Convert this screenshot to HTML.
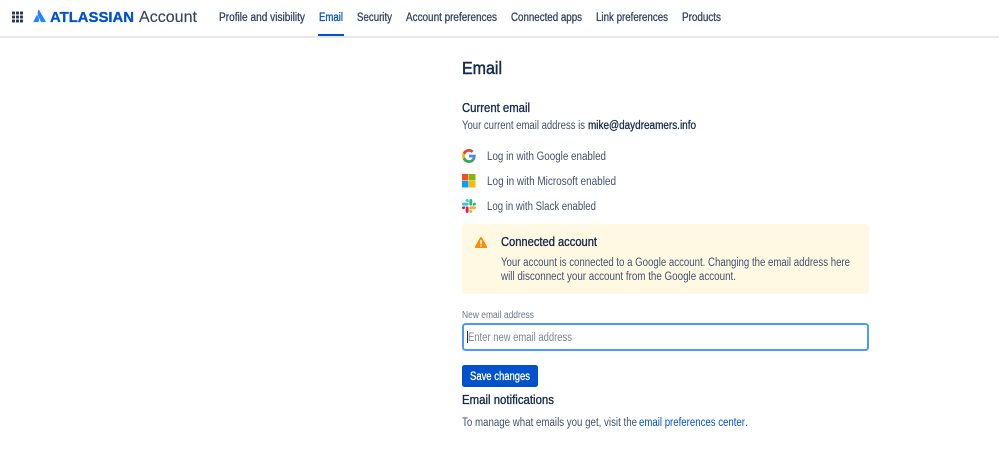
<!DOCTYPE html>
<html><head><meta charset="utf-8"><style>
html,body{margin:0;padding:0;background:#fff;width:999px;height:450px;overflow:hidden}
svg{display:block;position:absolute;left:0;top:0}
text{font-family:"Liberation Sans",sans-serif;font-size:11.5px;fill:#42526e}
.n{font-size:11.500px;fill:#344563;stroke:#344563;stroke-width:.3}
.b{fill:#42526e}
.h{font-size:12.500px;fill:#172b4d;stroke:#172b4d;stroke-width:.35}
</style></head><body>
<svg width="999" height="450" viewBox="0 0 999 450" xmlns="http://www.w3.org/2000/svg">
<rect x="0" y="36" width="999" height="2" fill="#e6e8ec"/>
<g fill="#253858"><rect x="12" y="11.500" width="3" height="3" rx=".6"/><rect x="16" y="11.500" width="3" height="3" rx=".6"/><rect x="20" y="11.500" width="3" height="3" rx=".6"/><rect x="12" y="15.500" width="3" height="3" rx=".6"/><rect x="16" y="15.500" width="3" height="3" rx=".6"/><rect x="20" y="15.500" width="3" height="3" rx=".6"/><rect x="12" y="19.500" width="3" height="3" rx=".6"/><rect x="16" y="19.500" width="3" height="3" rx=".6"/><rect x="20" y="19.500" width="3" height="3" rx=".6"/></g>
<g transform="translate(3.500 -.8) scale(.92 .96)">
<path d="M38.300 10.500C36.800 13 36.700 15.500 38 18.200L40.700 23.500C40.900 23.800 41 23.900 41.400 23.900H45.600C46 23.900 46.200 23.500 46 23.200Z" fill="#2684ff"/>
<path d="M36.800 16.700C36.500 16.300 36.200 16.400 36 16.800L32.600 23.200C32.400 23.600 32.600 23.900 33 23.900H37.500C37.800 23.900 38 23.800 38.100 23.500C39 21.700 38.500 18.800 36.800 16.700Z" fill="#2684ff"/>
</g>
<text x="50" y="22" textLength="84" lengthAdjust="spacingAndGlyphs" style="font-size:14.500px;font-weight:700;fill:#0052cc;stroke:#0052cc;stroke-width:.3">ATLASSIAN</text>
<text x="139" y="22" textLength="58" lengthAdjust="spacingAndGlyphs" style="font-size:15.500px;fill:#344563;stroke:#344563;stroke-width:.15">Account</text>
<text class="n" x="219" y="21" textLength="86" lengthAdjust="spacingAndGlyphs">Profile and visibility</text>
<text class="n" x="319" y="21" textLength="24" lengthAdjust="spacingAndGlyphs" style="fill:#0052cc;stroke:#0052cc">Email</text>
<text class="n" x="357" y="21" textLength="35" lengthAdjust="spacingAndGlyphs">Security</text>
<text class="n" x="406" y="21" textLength="91" lengthAdjust="spacingAndGlyphs">Account preferences</text>
<text class="n" x="511" y="21" textLength="71" lengthAdjust="spacingAndGlyphs">Connected apps</text>
<text class="n" x="596" y="21" textLength="72" lengthAdjust="spacingAndGlyphs">Link preferences</text>
<text class="n" x="682" y="21" textLength="39" lengthAdjust="spacingAndGlyphs">Products</text>
<rect x="318" y="34" width="26" height="2" fill="#0052cc"/>
<text x="462" y="74" textLength="40" lengthAdjust="spacingAndGlyphs" style="font-size:17.500px;fill:#172b4d;stroke:#172b4d;stroke-width:.5">Email</text>
<text class="h" x="462" y="112" textLength="68" lengthAdjust="spacingAndGlyphs">Current email</text>
<text class="b" x="462" y="129" textLength="123" lengthAdjust="spacingAndGlyphs">Your current email address is</text>
<text x="588" y="129" textLength="108" lengthAdjust="spacingAndGlyphs" style="fill:#172b4d;stroke:#172b4d;stroke-width:.3">mike@daydreamers.info</text>
<g transform="translate(462 149) scale(.58)">
<path d="M23.500 12.300c0-.8-.1-1.600-.2-2.300H12v4.400h6.500c-.3 1.500-1.100 2.700-2.400 3.600v3h3.900c2.200-2.100 3.500-5.100 3.500-8.700z" fill="#4285f4"/>
<path d="M12 24c3.200 0 6-1.100 8-2.900l-3.900-3c-1.100.7-2.500 1.200-4.100 1.200-3.100 0-5.800-2.100-6.700-5H1.300v3.100C3.300 21.300 7.300 24 12 24z" fill="#34a853"/>
<path d="M5.300 14.300c-.5-1.500-.5-3.100 0-4.600V6.600h-4c-1.700 3.300-1.700 7.400 0 10.800z" fill="#fbbc05"/>
<path d="M12 4.800c1.800 0 3.300.6 4.600 1.800l3.400-3.400C17.900 1.200 15.200 0 12 0 7.300 0 3.300 2.700 1.300 6.600l4 3.100c.9-2.800 3.600-4.900 6.700-4.900z" fill="#ea4335"/>
</g>
<text class="b" x="487" y="160" textLength="119" lengthAdjust="spacingAndGlyphs">Log in with Google enabled</text>
<rect x="462" y="174" width="6.500" height="6.500" fill="#f25022"/><rect x="469" y="174" width="6.500" height="6.500" fill="#7fba00"/><rect x="462" y="181" width="6.500" height="6.500" fill="#00a4ef"/><rect x="469" y="181" width="6.500" height="6.500" fill="#ffb900"/>
<text class="b" x="487" y="185" textLength="129" lengthAdjust="spacingAndGlyphs">Log in with Microsoft enabled</text>
<g transform="translate(462 199) scale(.58)">
<path fill="#e01e5a" d="M5.042 15.165a2.528 2.528 0 0 1-2.520 2.523A2.528 2.528 0 0 1 0 15.165a2.527 2.527 0 0 1 2.522-2.520h2.520v2.520zM6.313 15.165a2.527 2.527 0 0 1 2.521-2.520 2.527 2.527 0 0 1 2.521 2.520v6.313A2.528 2.528 0 0 1 8.834 24a2.528 2.528 0 0 1-2.521-2.522v-6.313z"/>
<path fill="#36c5f0" d="M8.834 5.042a2.528 2.528 0 0 1-2.521-2.520A2.528 2.528 0 0 1 8.834 0a2.528 2.528 0 0 1 2.521 2.522v2.520H8.834zM8.834 6.313a2.528 2.528 0 0 1 2.521 2.521 2.528 2.528 0 0 1-2.521 2.521H2.522A2.528 2.528 0 0 1 0 8.834a2.528 2.528 0 0 1 2.522-2.521h6.312z"/>
<path fill="#2eb67d" d="M18.956 8.834a2.528 2.528 0 0 1 2.522-2.521A2.528 2.528 0 0 1 24 8.834a2.528 2.528 0 0 1-2.522 2.521h-2.522V8.834zM17.688 8.834a2.528 2.528 0 0 1-2.523 2.521 2.527 2.527 0 0 1-2.520-2.521V2.522A2.527 2.527 0 0 1 15.165 0a2.528 2.528 0 0 1 2.523 2.522v6.312z"/>
<path fill="#ecb22e" d="M15.165 18.956a2.528 2.528 0 0 1 2.523 2.522A2.528 2.528 0 0 1 15.165 24a2.527 2.527 0 0 1-2.520-2.522v-2.522h2.520zM15.165 17.688a2.527 2.527 0 0 1-2.520-2.523 2.526 2.526 0 0 1 2.520-2.520h6.313A2.527 2.527 0 0 1 24 15.165a2.528 2.528 0 0 1-2.522 2.523h-6.313z"/>
</g>
<text class="b" x="487" y="210" textLength="109" lengthAdjust="spacingAndGlyphs">Log in with Slack enabled</text>
<rect x="462" y="224" width="407" height="70" rx="3" fill="#fff8e3"/>
<path d="M481 237c.4 0 .8.200 1 .6l5 9c.4.800-.1 1.400-1 1.400h-10c-.9 0-1.400-.6-1-1.400l5-9c.2-.4.600-.6 1-.6z" fill="#ff8b00"/>
<rect x="480.200" y="240" width="1.600" height="4.500" rx=".8" fill="#fff8e3"/><circle cx="481" cy="246" r=".9" fill="#fff8e3"/>
<text x="501" y="246" textLength="96" lengthAdjust="spacingAndGlyphs" style="font-size:12.500px;fill:#172b4d;stroke:#172b4d;stroke-width:.35">Connected account</text>
<text class="b" x="501" y="266" textLength="349" lengthAdjust="spacingAndGlyphs">Your account is connected to a Google account. Changing the email address here</text>
<text class="b" x="501" y="280" textLength="235" lengthAdjust="spacingAndGlyphs">will disconnect your account from the Google account.</text>
<text x="462" y="318" textLength="72" lengthAdjust="spacingAndGlyphs" style="font-size:10px;fill:#6b778c">New email address</text>
<rect x="463" y="324" width="405" height="26" rx="2.500" fill="#fff" stroke="#4c9aff" stroke-width="2"/>
<rect x="467" y="331" width="1" height="12" fill="#172b4d"/>
<text x="468" y="341" textLength="104" lengthAdjust="spacingAndGlyphs" style="fill:#7a869a">Enter new email address</text>
<rect x="462" y="365" width="76" height="22" rx="2.500" fill="#0052cc"/>
<text x="470" y="380" textLength="60" lengthAdjust="spacingAndGlyphs" style="fill:#fff;stroke:#fff;stroke-width:.3">Save changes</text>
<text class="h" x="462" y="404" textLength="92" lengthAdjust="spacingAndGlyphs">Email notifications</text>
<text class="b" x="462" y="426" textLength="175" lengthAdjust="spacingAndGlyphs">To manage what emails you get, visit the</text>
<text x="639" y="426" textLength="106" lengthAdjust="spacingAndGlyphs" style="fill:#0052cc">email preferences center</text>
<text class="b" x="745" y="426">.</text>
</svg>
</body></html>
